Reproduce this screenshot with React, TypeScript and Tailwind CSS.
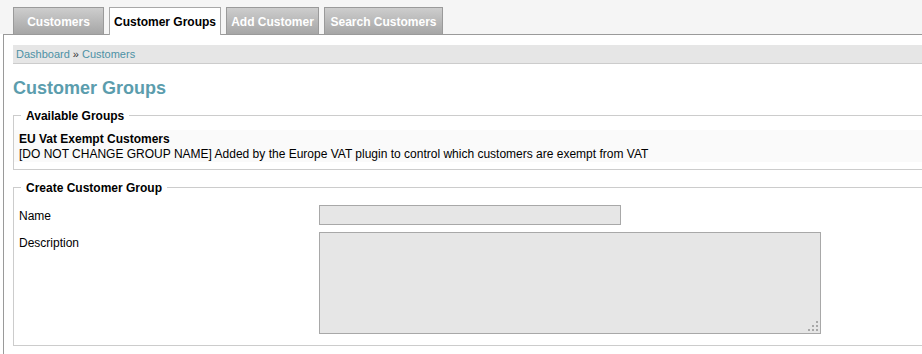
import React from 'react';

const TABS = [
  { label: 'Customers', width: 'w-[91px]', active: false },
  { label: 'Customer Groups', width: 'w-[112px]', active: true },
  { label: 'Add Customer', width: 'w-[93px]', active: false },
  { label: 'Search Customers', width: 'w-[119px]', active: false },
];

const Tab: React.FC<{ label: string; width: string; active: boolean }> = ({ label, width, active }) => {
  if (active) {
    return (
      <div
        className={`${width} h-[28px] -mb-px relative z-10 flex items-center justify-center pt-[1px] bg-white border border-b-0 border-[#a8a8a8] text-[12px] font-bold text-black`}
      >
        {label}
      </div>
    );
  }
  return (
    <div
      className={`${width} h-[27px] flex items-center justify-center pt-[2px] bg-gradient-to-b from-[#cdcdcd] to-[#a6a6a6] border border-b-0 border-[#9a9a9a] text-[12px] font-bold text-white`}
    >
      {label}
    </div>
  );
};

const ResizeGrip = () => (
  <svg className="absolute right-[3px] bottom-[3px]" width="10" height="10" viewBox="0 0 10 10">
    <g fill="#a8a8a8">
      <rect x="8" y="0" width="2" height="2" />
      <rect x="4" y="4" width="2" height="2" />
      <rect x="8" y="4" width="2" height="2" />
      <rect x="0" y="8" width="2" height="2" />
      <rect x="4" y="8" width="2" height="2" />
      <rect x="8" y="8" width="2" height="2" />
    </g>
  </svg>
);

export default function App() {
  return (
    <div
      className="w-[922px] h-[354px] overflow-hidden bg-white text-[12px] text-black"
      style={{ fontFamily: '"Liberation Sans", Arial, sans-serif' }}
    >
      <div className="w-[1000px]">
        {/* tab strip */}
        <div className="h-[34px] bg-[#f5f5f5] flex items-end gap-[5px] pl-[13px]">
          {TABS.map((t) => (
            <Tab key={t.label} {...t} />
          ))}
        </div>

        {/* panel */}
        <div className="ml-[3px] border-l border-t border-[#9a9a9a] pl-[9px] pt-[10px] pb-[20px]">
          <div className="h-[19px] bg-[#e6e6e6] border-b border-[#cccccc] pl-[3px] text-[11px] leading-[19px]">
            <span className="text-[#4d91a5]">Dashboard</span>
            <span className="text-[#333] mx-[3px]">»</span>
            <span className="text-[#4d91a5]">Customers</span>
          </div>

          <h1 className="mt-[12px] h-[24px] leading-[24px] text-[18px] font-bold text-[#5b9dad]">Customer Groups</h1>

          <fieldset className="mt-[7px] border border-[#cccccc]">
            <legend className="ml-[7px] px-[5px] font-bold leading-[16px] pt-[1px]">Available Groups</legend>
            <div className="mt-[6px] mb-[7px] bg-[#fafafa] pl-[5px] pt-[2px] pb-0 leading-[15px]">
              <div className="font-bold">EU Vat Exempt Customers</div>
              <div>[DO NOT CHANGE GROUP NAME] Added by the Europe VAT plugin to control which customers are exempt from VAT</div>
            </div>
          </fieldset>

          <fieldset className="mt-[9px] border border-[#cccccc]">
            <legend className="ml-[7px] px-[5px] font-bold leading-[16px] pt-[1px]">Create Customer Group</legend>
            <div className="pl-[5px] pt-[9px] pb-[11px] flex flex-col gap-[7px]">
              <div className="flex">
                <label className="w-[300px] pt-[3px] leading-[16px]">Name</label>
                <input className="w-[302px] h-[20px] bg-[#e6e6e6] border border-[#a8a8a8] outline-none" />
              </div>
              <div className="flex">
                <label className="w-[300px] pt-[3px] leading-[16px]">Description</label>
                <div className="relative">
                  <textarea className="block w-[502px] h-[102px] bg-[#e6e6e6] border border-[#a8a8a8] outline-none resize-none" />
                  <ResizeGrip />
                </div>
              </div>
            </div>
          </fieldset>
        </div>
      </div>
    </div>
  );
}
